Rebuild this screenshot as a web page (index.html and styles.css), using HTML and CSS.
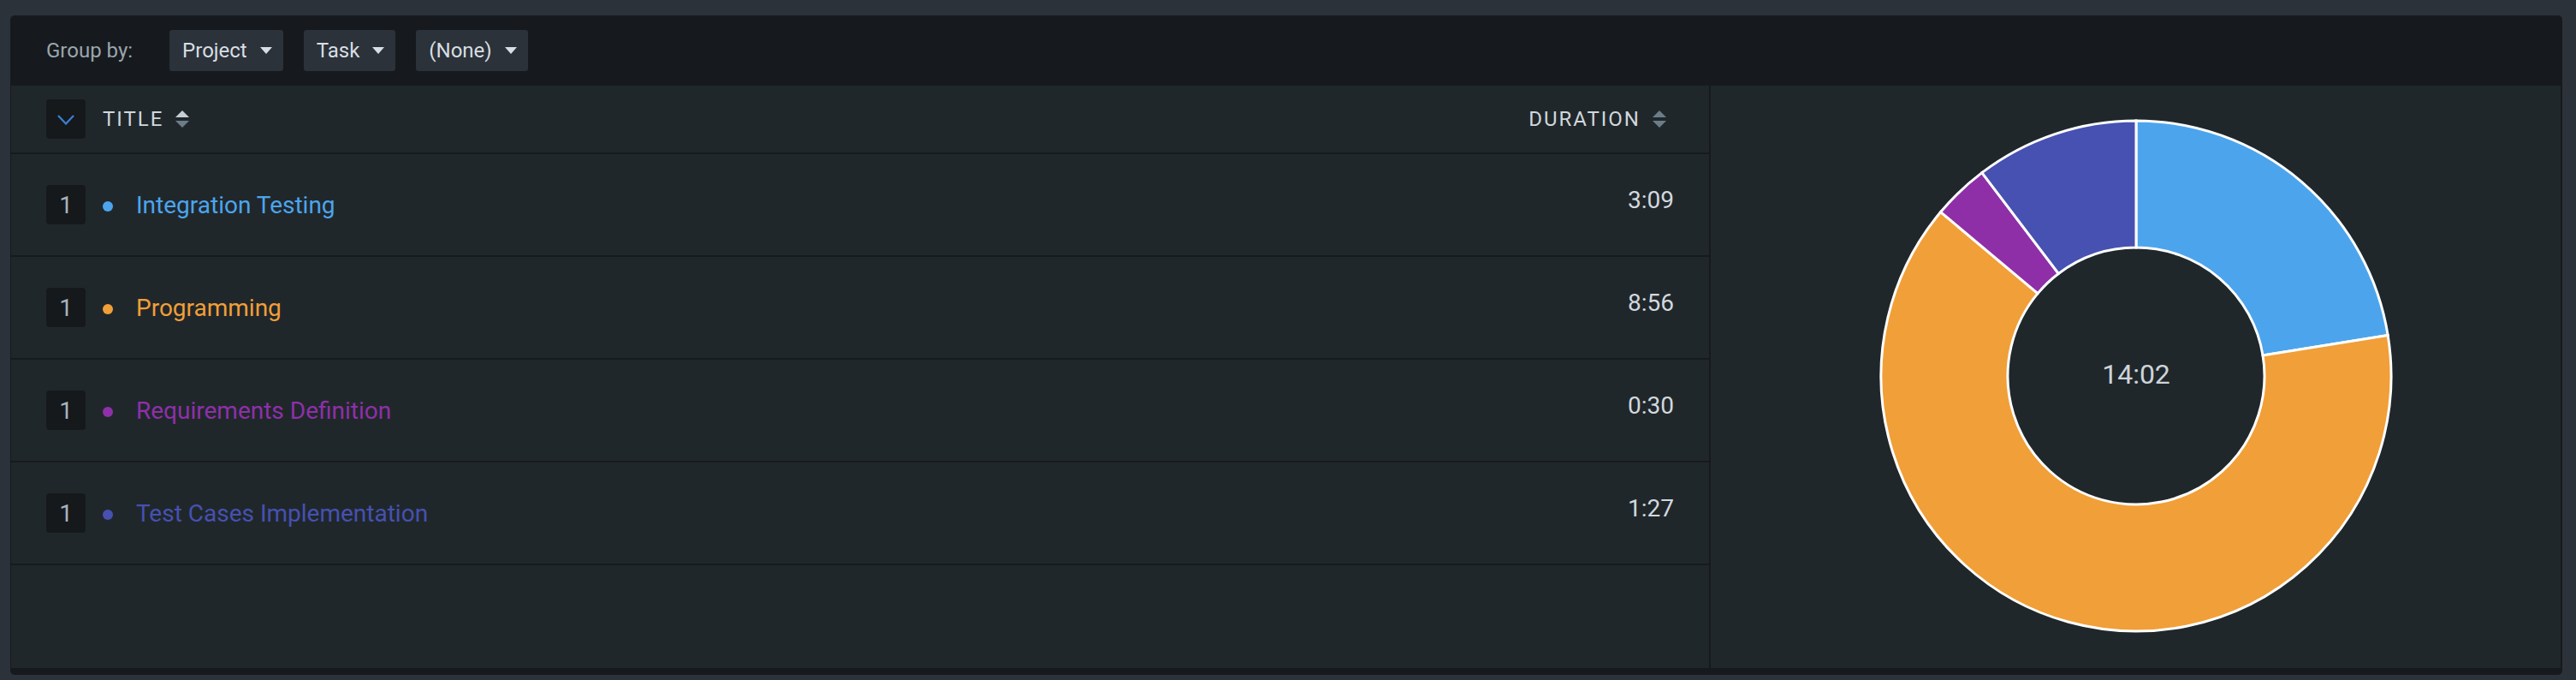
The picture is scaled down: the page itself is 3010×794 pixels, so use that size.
FILE: index.html
```html
<!DOCTYPE html>
<html>
<head>
<meta charset="utf-8">
<link rel="stylesheet" href="styles.css">
</head>
<body>
<div class="page">
  <div class="panel">
    <div class="toolbar">
      <span class="group-label">Group by:</span>
      <button class="dd">Project<svg class="caret" width="14" height="8" viewBox="0 0 14 8"><polygon points="0,0 14,0 7,8"/></svg></button>
      <button class="dd">Task<svg class="caret" width="14" height="8" viewBox="0 0 14 8"><polygon points="0,0 14,0 7,8"/></svg></button>
      <button class="dd">(None)<svg class="caret" width="14" height="8" viewBox="0 0 14 8"><polygon points="0,0 14,0 7,8"/></svg></button>
    </div>
    <div class="body">
      <div class="table">
        <div class="thead">
          <div class="collapse"><svg width="20" height="12" viewBox="0 0 20 12"><polyline points="1,1 10,10.5 19,1" fill="none" stroke="#3a80d2" stroke-width="2.2"/></svg></div>
          <span class="th-title">TITLE</span>
          <svg class="sort" width="16" height="20" viewBox="0 0 16 20"><polygon points="0,8 8,0 16,8" fill="#c6cfd6"/><polygon points="0,12 16,12 8,20" fill="#6b7d89"/></svg>
          <span class="spacer"></span>
          <span class="th-dur">DURATION</span>
          <svg class="sort" width="16" height="20" viewBox="0 0 16 20"><polygon points="0,8 8,0 16,8" fill="#6b7d89"/><polygon points="0,12 16,12 8,20" fill="#6b7d89"/></svg>
        </div>
        <div class="row">
          <span class="badge">1</span><span class="dot c-blue-bg"></span><span class="title c-blue">Integration Testing</span><span class="dur">3:09</span>
        </div>
        <div class="row">
          <span class="badge">1</span><span class="dot c-orange-bg"></span><span class="title c-orange">Programming</span><span class="dur">8:56</span>
        </div>
        <div class="row">
          <span class="badge">1</span><span class="dot c-purple-bg"></span><span class="title c-purple">Requirements Definition</span><span class="dur">0:30</span>
        </div>
        <div class="row">
          <span class="badge">1</span><span class="dot c-indigo-bg"></span><span class="title c-indigo">Test Cases Implementation</span><span class="dur">1:27</span>
        </div>
      </div>
      <div class="chart">
        <svg width="606" height="606" viewBox="-303 -303 606 606">
          <g stroke="#ffffff" stroke-width="3" stroke-linejoin="miter">
            <path fill="#4ca5ec" d="M0,-298 A298,298 0 0 1 294.17,-47.60 L148.07,-23.96 A150,150 0 0 0 0,-150 Z"/>
            <path fill="#f19f38" d="M294.17,-47.60 A298,298 0 1 1 -228.36,-191.46 L-114.95,-96.37 A150,150 0 1 0 148.07,-23.96 Z"/>
            <path fill="#8e2fa8" d="M-228.36,-191.46 A298,298 0 0 1 -180.16,-237.38 L-90.69,-119.49 A150,150 0 0 0 -114.95,-96.37 Z"/>
            <path fill="#4651b1" d="M-180.16,-237.38 A298,298 0 0 1 0,-298 L0,-150 A150,150 0 0 0 -90.69,-119.49 Z"/>
          </g>
          <text class="total" x="0" y="9" text-anchor="middle">14:02</text>
        </svg>
      </div>
    </div>
  </div>
</div>
</body>
</html>
```
FILE: styles.css
```css
html, body {
  margin: 0;
  padding: 0;
}
body {
  background: #2b3239;
  font-family: Roboto, "Liberation Sans", sans-serif;
  width: 3010px;
  height: 794px;
  overflow: hidden;
}
.page {
  padding: 18px 16px 6px 12px;
}
.panel {
  height: 770px;
  background: #161a1e;
  border-radius: 5px;
  padding: 0 2px 8px 1px;
  box-sizing: border-box;
  display: flex;
  flex-direction: column;
}
.toolbar {
  height: 82px;
  display: flex;
  align-items: center;
  padding-left: 41px;
  flex: none;
}
.group-label {
  font-size: 24px;
  color: #9ba6ae;
  margin-right: 43px;
}
.dd {
  height: 48px;
  background: #2b3239;
  border: none;
  border-radius: 3px;
  color: #d8dee3;
  font-family: Roboto, "Liberation Sans", sans-serif;
  font-size: 24px;
  padding: 0 13px 0 15px;
  margin: 0 24px 0 0;
  display: flex;
  align-items: center;
  gap: 15px;
}
.caret {
  fill: #d8dee3;
  display: block;
}
.body {
  flex: 1;
  display: flex;
  background: #20272b;
}
.table {
  width: 1984px;
  border-right: 2px solid #161a1e;
  flex: none;
}
.thead {
  height: 78px;
  border-bottom: 2px solid #161a1e;
  display: flex;
  align-items: center;
  padding: 0 50px 0 41px;
}
.collapse {
  width: 46px;
  height: 46px;
  background: #15191c;
  border-radius: 4px;
  display: flex;
  align-items: center;
  justify-content: center;
  margin-right: 20px;
}
.collapse svg {
  display: block;
  margin-top: 2px;
}
.th-title, .th-dur {
  font-size: 24px;
  letter-spacing: 2px;
  color: #d0d7dd;
  line-height: 1;
}
.sort {
  display: block;
  margin-left: 14px;
}
.spacer {
  flex: 1;
}
.row {
  height: 118px;
  border-bottom: 2px solid #161a1e;
  display: flex;
  align-items: center;
  padding: 0 41px;
}
.badge {
  width: 46px;
  height: 46px;
  background: #15191c;
  border-radius: 4px;
  color: #a9b3ba;
  font-size: 28px;
  display: flex;
  align-items: center;
  justify-content: center;
  flex: none;
}
.dot {
  width: 12px;
  height: 12px;
  border-radius: 50%;
  margin: 4px 0 0 20px;
  flex: none;
}
.title {
  font-size: 28px;
  margin-left: 27px;
  flex: 1;
}
.dur {
  font-size: 28px;
  color: #d2d8de;
  margin-bottom: 11px;
}
.c-blue { color: #4ca5ec; }
.c-orange { color: #f19f38; }
.c-purple { color: #8e30a9; }
.c-indigo { color: #4651b1; }
.c-blue-bg { background: #4ca5ec; }
.c-orange-bg { background: #f19f38; }
.c-purple-bg { background: #8e30a9; }
.c-indigo-bg { background: #4651b1; }
.chart {
  flex: 1;
  display: flex;
  align-items: center;
  justify-content: center;
}
.chart svg {
  display: block;
  margin-bottom: 2px;
}
.total {
  font-family: Roboto, "Liberation Sans", sans-serif;
  font-size: 32px;
  fill: #cdd4da;
}
```
